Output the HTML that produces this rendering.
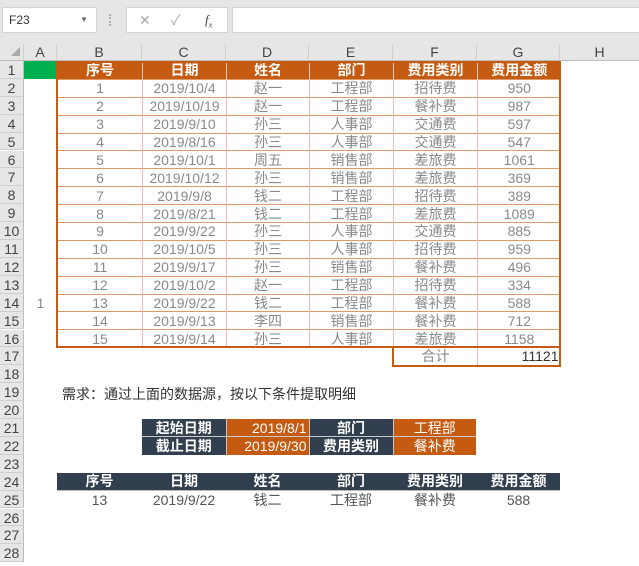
<!DOCTYPE html>
<html><head><meta charset="utf-8"><style>
*{margin:0;padding:0;box-sizing:border-box}
body{width:639px;height:566px;overflow:hidden;background:#fff;font-family:"Liberation Sans","Noto Sans CJK SC",sans-serif;position:relative}
.a{position:absolute}
.top{left:0;top:0;width:639px;height:44px;background:#e6e6e6}
.box{background:#fff;border:1px solid #d4d4d4}
.ch{top:44px;height:17px;background:#e6e6e6;border-right:1px solid #cfcfcf;border-bottom:1px solid #bdbdbd;font-size:14px;color:#444;text-align:center;line-height:17px}
.rh{left:0;width:24px;height:17.9px;background:#e6e6e6;border-bottom:1px solid #cfcfcf;border-right:1px solid #bdbdbd;font-size:14px;color:#444;text-align:center;line-height:18px}
table{border-collapse:collapse;table-layout:fixed;position:absolute}
td{height:17.9px;padding:0;font-size:14px;text-align:center;white-space:nowrap;overflow:hidden;line-height:16px}
.d td{color:#8a8a8a;border-top:1px solid #e09a6a;border-left:1px solid #f0b8b8}
.d tr.h td{background:#c55a11;color:#fff;font-weight:bold;border-left:1px solid #f3c9c0}
.ob{position:absolute;border:2px solid #c55a11;pointer-events:none}
</style></head><body>
<div class="a top"></div>
<div class="a box" style="left:2px;top:7px;width:95px;height:26px;font-size:12px;line-height:24px;padding-left:6px;color:#333">F23<span style="position:absolute;right:8px;top:0;font-size:8px;color:#666">▼</span></div>
<div class="a" style="left:109px;top:14px;width:2px;height:12px;border-left:2px dotted #b0b0b0"></div>
<div class="a box" style="left:126px;top:7px;width:102px;height:26px;color:#aaa;font-size:14px;line-height:24px"><span class="a" style="left:12px">✕</span><span class="a" style="left:44px">✓</span><span class="a" style="left:78px;color:#444;font-family:'Liberation Serif',serif;font-style:italic;font-size:13px">f<sub style="font-size:8px">x</sub></span></div>
<div class="a box" style="left:232px;top:7px;width:410px;height:26px"></div>
<div class="a ch" style="left:0;width:24px;color:#aaa;font-size:9px;text-align:right;padding-right:3px">◢</div>
<div class="a ch" style="left:24px;width:33px">A</div>
<div class="a ch" style="left:57px;width:85px">B</div>
<div class="a ch" style="left:142px;width:84px">C</div>
<div class="a ch" style="left:226px;width:83px">D</div>
<div class="a ch" style="left:309px;width:84px">E</div>
<div class="a ch" style="left:393px;width:84px">F</div>
<div class="a ch" style="left:477px;width:83px">G</div>
<div class="a ch" style="left:560px;width:79px;border-right:0">H</div>
<div class="a rh" style="top:61px">1</div><div class="a rh" style="top:78.9px">2</div><div class="a rh" style="top:96.8px">3</div><div class="a rh" style="top:114.7px">4</div><div class="a rh" style="top:132.6px">5</div><div class="a rh" style="top:150.5px">6</div><div class="a rh" style="top:168.4px">7</div><div class="a rh" style="top:186.3px">8</div><div class="a rh" style="top:204.2px">9</div><div class="a rh" style="top:222.1px">10</div><div class="a rh" style="top:240px">11</div><div class="a rh" style="top:257.9px">12</div><div class="a rh" style="top:275.8px">13</div><div class="a rh" style="top:293.7px">14</div><div class="a rh" style="top:311.6px">15</div><div class="a rh" style="top:329.5px">16</div><div class="a rh" style="top:347.4px">17</div><div class="a rh" style="top:365.3px">18</div><div class="a rh" style="top:383.2px">19</div><div class="a rh" style="top:401.1px">20</div><div class="a rh" style="top:419px">21</div><div class="a rh" style="top:436.9px">22</div><div class="a rh" style="top:454.8px">23</div><div class="a rh" style="top:472.7px">24</div><div class="a rh" style="top:490.6px">25</div><div class="a rh" style="top:508.5px">26</div><div class="a rh" style="top:526.4px">27</div><div class="a rh" style="top:544.3px">28</div>
<div class="a" style="left:24px;top:61px;width:33px;height:18px;background:#00b050"></div>
<div class="a" style="left:24px;top:294px;width:33px;height:18px;font-size:14px;color:#8a8a8a;text-align:center;line-height:18px">1</div>
<table class="d" style="left:57px;top:61px;width:503px">
<colgroup><col style="width:85px"><col style="width:84px"><col style="width:83px"><col style="width:84px"><col style="width:84px"><col style="width:83px"></colgroup>
<tr class="h"><td>序号</td><td>日期</td><td>姓名</td><td>部门</td><td>费用类别</td><td>费用金额</td></tr>
<tr><td>1</td><td>2019/10/4</td><td>赵一</td><td>工程部</td><td>招待费</td><td>950</td></tr>
<tr><td>2</td><td>2019/10/19</td><td>赵一</td><td>工程部</td><td>餐补费</td><td>987</td></tr>
<tr><td>3</td><td>2019/9/10</td><td>孙三</td><td>人事部</td><td>交通费</td><td>597</td></tr>
<tr><td>4</td><td>2019/8/16</td><td>孙三</td><td>人事部</td><td>交通费</td><td>547</td></tr>
<tr><td>5</td><td>2019/10/1</td><td>周五</td><td>销售部</td><td>差旅费</td><td>1061</td></tr>
<tr><td>6</td><td>2019/10/12</td><td>孙三</td><td>销售部</td><td>差旅费</td><td>369</td></tr>
<tr><td>7</td><td>2019/9/8</td><td>钱二</td><td>工程部</td><td>招待费</td><td>389</td></tr>
<tr><td>8</td><td>2019/8/21</td><td>钱二</td><td>工程部</td><td>差旅费</td><td>1089</td></tr>
<tr><td>9</td><td>2019/9/22</td><td>孙三</td><td>人事部</td><td>交通费</td><td>885</td></tr>
<tr><td>10</td><td>2019/10/5</td><td>孙三</td><td>人事部</td><td>招待费</td><td>959</td></tr>
<tr><td>11</td><td>2019/9/17</td><td>孙三</td><td>销售部</td><td>餐补费</td><td>496</td></tr>
<tr><td>12</td><td>2019/10/2</td><td>赵一</td><td>工程部</td><td>招待费</td><td>334</td></tr>
<tr><td>13</td><td>2019/9/22</td><td>钱二</td><td>工程部</td><td>餐补费</td><td>588</td></tr>
<tr><td>14</td><td>2019/9/13</td><td>李四</td><td>销售部</td><td>餐补费</td><td>712</td></tr>
<tr><td>15</td><td>2019/9/14</td><td>孙三</td><td>人事部</td><td>差旅费</td><td>1158</td></tr>
</table>
<div class="ob" style="left:56px;top:61px;width:505px;height:287px"></div>
<table class="d" style="left:393px;top:347px;width:167px">
<colgroup><col style="width:84px"><col style="width:83px"></colgroup>
<tr><td style="border-top:0">合计</td><td style="border-top:0;text-align:right;color:#333;padding-right:2px">11121</td></tr>
</table>
<div class="ob" style="left:392px;top:346px;width:169px;height:21px"></div>
<div class="a" style="left:62px;top:385px;font-size:14px;color:#333;line-height:18px">需求：通过上面的数据源，按以下条件提取明细</div>
<table style="left:142px;top:419px;width:334px">
<colgroup><col style="width:84px"><col style="width:83px"><col style="width:84px"><col style="width:83px"></colgroup>
<tr style="color:#fff;font-weight:bold"><td style="background:#323f4f;border:1px solid #c9c9c9;border-left:0;border-top:0">起始日期</td><td style="background:#c55a11;font-weight:normal;text-align:right;padding-right:2px;border:1px solid #c9c9c9;border-top:0">2019/8/1</td><td style="background:#323f4f;border:1px solid #c9c9c9;border-top:0">部门</td><td style="background:#c55a11;font-weight:normal;border:1px solid #c9c9c9;border-top:0;border-right:0">工程部</td></tr>
<tr style="color:#fff;font-weight:bold"><td style="background:#323f4f;border-right:1px solid #c9c9c9">截止日期</td><td style="background:#c55a11;font-weight:normal;text-align:right;padding-right:2px;border-right:1px solid #c9c9c9">2019/9/30</td><td style="background:#323f4f;border-right:1px solid #c9c9c9">费用类别</td><td style="background:#c55a11;font-weight:normal">餐补费</td></tr>
</table>
<table style="left:57px;top:472.7px;width:503px">
<colgroup><col style="width:85px"><col style="width:84px"><col style="width:83px"><col style="width:84px"><col style="width:84px"><col style="width:83px"></colgroup>
<tr style="background:#323f4f;color:#fff;font-weight:bold"><td>序号</td><td>日期</td><td>姓名</td><td>部门</td><td>费用类别</td><td>费用金额</td></tr>
<tr style="color:#555"><td style="border-top:1px solid #bbb">13</td><td style="border-top:1px solid #bbb">2019/9/22</td><td style="border-top:1px solid #bbb">钱二</td><td style="border-top:1px solid #bbb">工程部</td><td style="border-top:1px solid #bbb">餐补费</td><td style="border-top:1px solid #bbb">588</td></tr>
</table>
</body></html>
